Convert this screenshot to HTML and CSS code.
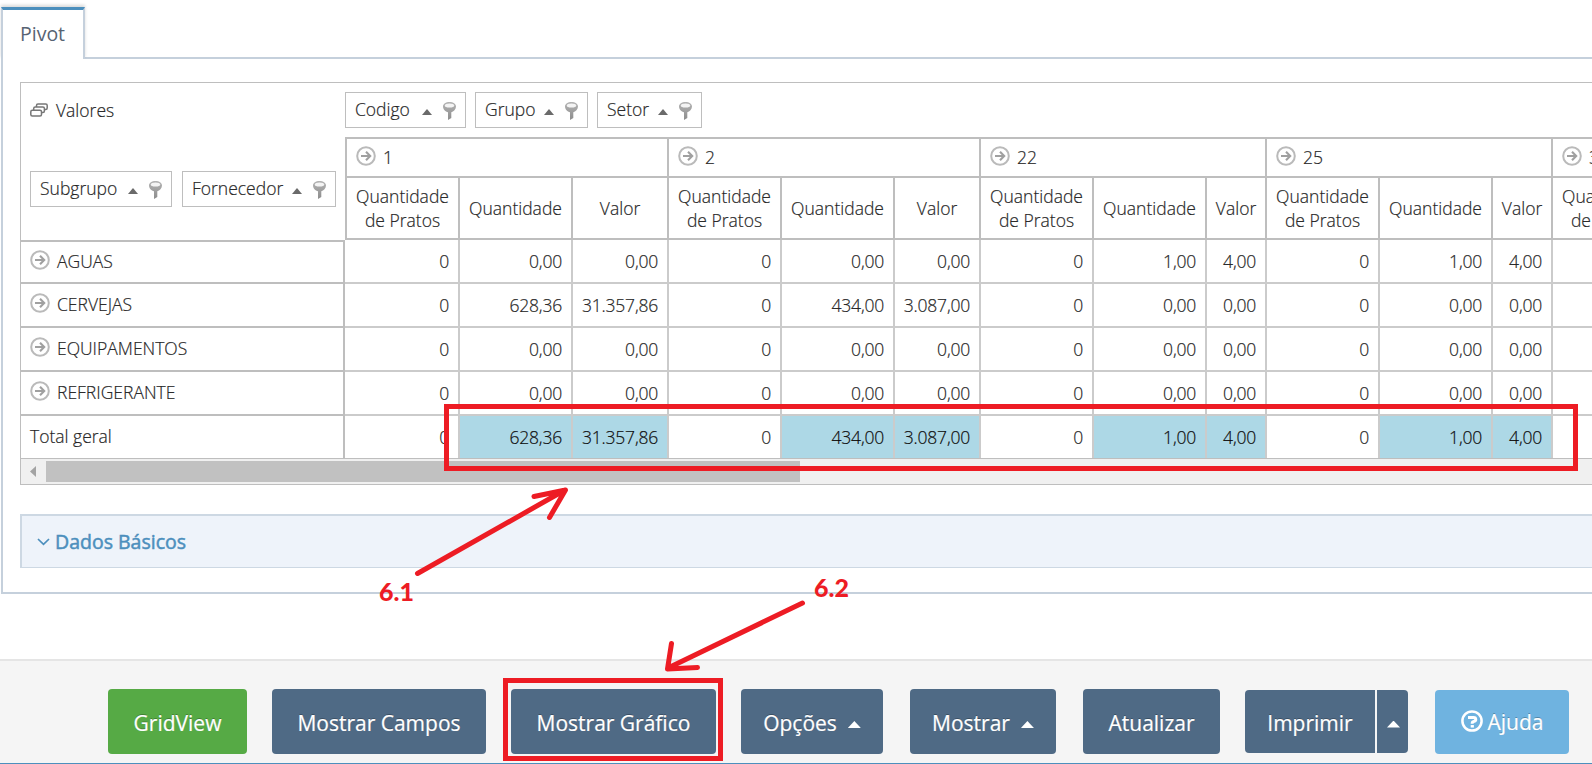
FILE: index.html
```html
<!DOCTYPE html>
<html lang="pt-br">
<head>
    <meta charset="UTF-8">
    <meta name="viewport" content="width=device-width, initial-scale=1.0">
    <title>Pivot</title>
    <link rel="stylesheet" href="styles.css">
</head>
<body>

<svg class="icon-defs" width="0" height="0">
    <defs>
        <linearGradient id="pinFill" x1="0" y1="0" x2="0" y2="1">
            <stop offset="0" stop-color="#b4b4b4"/>
            <stop offset="1" stop-color="#8c8c8c"/>
        </linearGradient>
        <symbol id="pin" viewBox="0 0 13 18">
            <path d="M0 4.500C0 1.800 2.800 0 6.500 0S13 1.800 13 4.500C13 7.500 10.500 9.500 8.300 10.300V16L5 18V10.300C2.500 9.500 0 7.500 0 4.500Z" fill="url(#pinFill)"/>
            <ellipse cx="6.500" cy="3.500" rx="4.700" ry="2" fill="#f4f4f4"/>
        </symbol>
        <symbol id="expand" viewBox="0 0 20 20">
            <circle cx="10" cy="10" r="8.800" fill="#fff" stroke="#bababa" stroke-width="2"/>
            <path d="M5 10H14M10 5.800L14.200 10L10 14.200" fill="none" stroke="#a0a0a0" stroke-width="2.100"/>
        </symbol>
        <symbol id="up" viewBox="0 0 10 6">
            <path d="M0 6L5 0L10 6Z" fill="#6a6a6a"/>
        </symbol>
    </defs>
</svg>

<div class="tabs">
    <a class="tab">Pivot</a>
</div>

<div class="tab-content">
    <div class="pivot">
        <div class="pivot-main">
            <div class="row-area">
                <div class="row-area-head">
                    <div class="data-field">
                        <svg width="18" height="14" viewBox="0 0 18 14" fill="#fff" stroke="#777" stroke-width="1.500">
                            <rect x="6.500" y="1" width="10.700" height="5.500" rx="1.500"/>
                            <rect x="3.700" y="4" width="10.700" height="5.500" rx="1.500"/>
                            <rect x="0.800" y="7.300" width="10.700" height="5.700" rx="1.500"/>
                        </svg>
                        <span>Valores</span>
                    </div>
                    <div class="fields">
                        <div class="field subgrupo">Subgrupo<svg class="up"><use href="#up"/></svg><svg class="pin"><use href="#pin"/></svg></div>
                        <div class="field fornecedor">Fornecedor<svg class="up"><use href="#up"/></svg><svg class="pin"><use href="#pin"/></svg></div>
                    </div>
                </div>
                <div class="row-head first"><svg class="expand"><use href="#expand"/></svg>AGUAS</div>
                <div class="row-head"><svg class="expand"><use href="#expand"/></svg>CERVEJAS</div>
                <div class="row-head"><svg class="expand"><use href="#expand"/></svg>EQUIPAMENTOS</div>
                <div class="row-head"><svg class="expand"><use href="#expand"/></svg>REFRIGERANTE</div>
                <div class="row-head last">Total geral</div>
            </div>

            <div class="column-area">
                <div class="fields">
                    <div class="field codigo">Codigo<svg class="up"><use href="#up"/></svg><svg class="pin"><use href="#pin"/></svg></div>
                    <div class="field grupo">Grupo<svg class="up"><use href="#up"/></svg><svg class="pin"><use href="#pin"/></svg></div>
                    <div class="field setor">Setor<svg class="up"><use href="#up"/></svg><svg class="pin"><use href="#pin"/></svg></div>
                </div>
                <table>
                    <colgroup>
                        <col class="c-first"><col class="c-qtd"><col class="c-valor1">
                        <col class="c-qtd"><col class="c-qtd"><col class="c-valor2">
                        <col class="c-qtd"><col class="c-qtd"><col class="c-valor">
                        <col class="c-qtd"><col class="c-qtd"><col class="c-valor">
                        <col class="c-qtd">
                    </colgroup>
                    <thead>
                        <tr class="groups">
                            <th colspan="3"><svg class="expand"><use href="#expand"/></svg>1</th>
                            <th colspan="3"><svg class="expand"><use href="#expand"/></svg>2</th>
                            <th colspan="3"><svg class="expand"><use href="#expand"/></svg>22</th>
                            <th colspan="3"><svg class="expand"><use href="#expand"/></svg>25</th>
                            <th><svg class="expand"><use href="#expand"/></svg>3</th>
                        </tr>
                        <tr class="measures">
                            <th>Quantidade<br>de Pratos</th><th>Quantidade</th><th>Valor</th>
                            <th>Quantidade<br>de Pratos</th><th>Quantidade</th><th>Valor</th>
                            <th>Quantidade<br>de Pratos</th><th>Quantidade</th><th>Valor</th>
                            <th>Quantidade<br>de Pratos</th><th>Quantidade</th><th>Valor</th>
                            <th>Quantidade<br>de Pratos</th>
                        </tr>
                    </thead>
                    <tbody>
                        <tr>
                            <td>0</td><td>0,00</td><td>0,00</td>
                            <td>0</td><td>0,00</td><td>0,00</td>
                            <td>0</td><td>1,00</td><td>4,00</td>
                            <td>0</td><td>1,00</td><td>4,00</td>
                            <td></td>
                        </tr>
                        <tr>
                            <td>0</td><td>628,36</td><td>31.357,86</td>
                            <td>0</td><td>434,00</td><td>3.087,00</td>
                            <td>0</td><td>0,00</td><td>0,00</td>
                            <td>0</td><td>0,00</td><td>0,00</td>
                            <td></td>
                        </tr>
                        <tr>
                            <td>0</td><td>0,00</td><td>0,00</td>
                            <td>0</td><td>0,00</td><td>0,00</td>
                            <td>0</td><td>0,00</td><td>0,00</td>
                            <td>0</td><td>0,00</td><td>0,00</td>
                            <td></td>
                        </tr>
                        <tr>
                            <td>0</td><td>0,00</td><td>0,00</td>
                            <td>0</td><td>0,00</td><td>0,00</td>
                            <td>0</td><td>0,00</td><td>0,00</td>
                            <td>0</td><td>0,00</td><td>0,00</td>
                            <td></td>
                        </tr>
                        <tr class="total">
                            <td>0</td><td class="hl">628,36</td><td class="hl">31.357,86</td>
                            <td>0</td><td class="hl">434,00</td><td class="hl">3.087,00</td>
                            <td>0</td><td class="hl">1,00</td><td class="hl">4,00</td>
                            <td>0</td><td class="hl">1,00</td><td class="hl">4,00</td>
                            <td></td>
                        </tr>
                    </tbody>
                </table>
            </div>
        </div>
        <div class="scrollbar">
            <svg width="6" height="11" viewBox="0 0 6 11"><path d="M6 0V11L0 5.500Z" fill="#a3a3a3"/></svg>
            <div class="thumb"></div>
        </div>
    </div>

    <div class="accordion">
        <svg width="13" height="8" viewBox="0 0 13 8"><path d="M1 1L6.500 6.300L12 1" fill="none" stroke="#4c8fbd" stroke-width="1.700"/></svg>
        <span>Dados Básicos</span>
    </div>
</div>

<div class="footer">
    <a class="btn btn-green gridview">GridView</a>
    <a class="btn campos">Mostrar Campos</a>
    <a class="btn grafico">Mostrar Gráfico</a>
    <a class="btn opcoes">Opções <i class="caret"></i></a>
    <a class="btn mostrar">Mostrar <i class="caret"></i></a>
    <a class="btn atualizar">Atualizar</a>
    <div class="btn-group">
        <a class="btn imprimir">Imprimir</a>
        <a class="btn toggle"><i class="caret"></i></a>
    </div>
    <a class="btn btn-blue ajuda">
        <svg width="22" height="22" viewBox="0 0 22 22" fill="none" stroke="#fff">
            <circle cx="11" cy="11" r="9.600" stroke-width="2.500"/>
            <path d="M7 7.500H12.500C15.500 7.500 15.500 11.200 12.700 11.600C11.300 11.800 11.200 12.200 11.200 13.800" stroke-width="3"/>
            <path d="M9.700 16.300H12.900" stroke-width="2.500"/>
        </svg>
        Ajuda
    </a>
</div>

<!-- step markers -->
<svg class="marks" width="1592" height="764" viewBox="0 0 1592 764">
    <rect x="446.500" y="406.500" width="1129" height="62"/>
    <rect x="505.500" y="680.500" width="215" height="78"/>
    <path d="M417.500 573.500L565 490M534 496.500L565.500 490L549.500 517.500"/>
    <path d="M802.500 603L668 668M671.500 643.500L667.500 669L697.500 667.500"/>
    <text x="379" y="601">6.1</text>
    <text x="814" y="597">6.2</text>
</svg>

</body>
</html>
```
FILE: styles.css
```css
* {
    box-sizing: border-box;
}
body {
    margin: 0;
    height: 764px;
    padding-top: 7px;
    position: relative;
    overflow: hidden;
    background-color: #fff;
    font-family: "Open Sans", sans-serif;
    font-size: 17.5px;
    font-weight: 300;
    color: #222;
    display: flex;
    flex-direction: column;
}
svg {
    display: block;
    flex: none;
}
.icon-defs {
    position: absolute;
}

/* tabs */
.tabs {
    display: flex;
    padding-left: 1px;
    height: 50px;
}
.tab {
    position: relative;
    z-index: 1;
    width: 84px;
    height: 52px;
    border: 2px solid #c5d0dc;
    border-top: 3px solid #4c8fbd;
    border-bottom: none;
    background-color: #fff;
    box-shadow: 0 -2px 3px rgba(0, 0, 0, 0.15);
    clip-path: inset(-6px -4px 0 -1px);
    padding-left: 17px;
    line-height: 48px;
    font-size: 19.5px;
    font-weight: 400;
    color: #576373;
}
.tab-content {
    margin-left: 1px;
    height: 537px;
    border: 2px solid #c5d0dc;
    border-right: none;
    padding: 23px 0 0 17px;
}

/* pivot grid */
.pivot {
    height: 403px;
    border: 1px solid #bebebe;
    border-right: none;
    overflow: hidden;
    -webkit-text-stroke: 0.2px #333;
}
.pivot-main {
    display: flex;
}
.row-area {
    flex: none;
    width: 324px;
}
.row-area-head {
    height: 157px;
    padding: 14px 9px 0;
}
.data-field {
    display: flex;
    align-items: center;
    gap: 8px;
    height: 26px;
}
.fields {
    display: flex;
    gap: 9px;
}
.row-area .fields {
    gap: 10px;
    margin-top: 48px;
}
.column-area {
    flex: 1;
    min-width: 0;
    overflow: hidden;
}
.column-area .fields {
    height: 54px;
    padding-top: 9px;
}
.field {
    display: flex;
    align-items: center;
    height: 36px;
    border: 1px solid #bebebe;
    padding: 0 9px 2px;
}
.subgrupo { width: 142px; }
.fornecedor { width: 154px; }
.codigo { width: 121px; }
.grupo { width: 113px; }
.setor { width: 105px; }
.up {
    width: 10px;
    height: 6px;
    margin: 6px 11px 0 auto;
}
.pin {
    width: 13px;
    height: 18px;
    margin-top: 3px;
}
.row-head {
    display: flex;
    align-items: center;
    height: 44px;
    padding: 0 0 2px 9px;
    border-right: 2px solid #bebebe;
    border-bottom: 2px solid #bebebe;
}
.row-head.first {
    border-top: 2px solid #bebebe;
}
.row-head.last {
    height: 42px;
    border-bottom: none;
}
.row-head .expand {
    margin: -2px 7px 0 0;
}
.expand {
    width: 20px;
    height: 20px;
}

table {
    table-layout: fixed;
    width: 1321px;
    border-collapse: separate;
    border-spacing: 0;
}
.c-first { width: 115px; }
.c-qtd { width: 113px; }
.c-valor1 { width: 96px; }
.c-valor2 { width: 86px; }
.c-valor { width: 60px; }
th {
    padding: 0;
    font-weight: 300;
    border-right: 2px solid #bebebe;
    border-bottom: 2px solid #bebebe;
}
th:first-child {
    border-left: 2px solid #bebebe;
}
.groups th {
    height: 41px;
    border-top: 2px solid #bebebe;
    padding-left: 9px;
    text-align: left;
    line-height: 37px;
}
.groups .expand {
    float: left;
    margin: 7px 7px 0 0;
}
.measures th {
    height: 62px;
    padding-bottom: 1px;
    line-height: 24px;
}
td {
    height: 44px;
    padding: 0 9px 1px 0;
    text-align: right;
    letter-spacing: -0.2px;
    border-right: 2px solid #cbcbcb;
    border-bottom: 2px solid #cbcbcb;
}
.total td {
    height: 42px;
    border-bottom: none;
}
.total .hl {
    background-color: #add8e6;
    background-clip: padding-box;
    color: #000;
}

.scrollbar {
    display: flex;
    align-items: center;
    height: 26px;
    border-top: 1px solid #bebebe;
    background-color: #f0f0f0;
    padding-left: 9px;
}
.thumb {
    width: 754px;
    height: 21px;
    margin-left: 10px;
    background-color: #c1c1c1;
}

.accordion {
    display: flex;
    align-items: center;
    gap: 5px;
    height: 54px;
    margin-top: 29px;
    padding-left: 15px;
    border: 2px solid #cdd8e3;
    border-right: none;
    border-bottom-width: 1px;
    background-color: #eef3fa;
    color: #4c8fbd;
    font-size: 19.5px;
    font-weight: 400;
    -webkit-text-stroke: 0.5px #4c8fbd;
}

/* buttons */
.footer {
    display: flex;
    align-items: flex-start;
    height: 105px;
    margin-top: 65px;
    padding: 28px 0 0 108px;
    border-top: 2px solid #e5e5e5;
    border-bottom: 1px solid #4c8fbd;
    background-color: #f5f5f5;
}
.btn {
    display: flex;
    flex: none;
    align-items: center;
    justify-content: center;
    height: 65px;
    padding-top: 2px;
    border-radius: 4px;
    background-color: #4f6a85;
    color: #fff;
    font-size: 21px;
    font-weight: 400;
    white-space: nowrap;
    text-shadow: 0 -1px 0 rgba(0, 0, 0, 0.25);
    -webkit-text-stroke: 0.2px #fff;
}
.btn-green { background-color: #56aa45; }
.btn-blue { background-color: #6fb3e0; }
.gridview { width: 139px; }
.campos { width: 214px; margin-left: 25px; }
.grafico { width: 205px; margin-left: 25px; }
.opcoes { width: 142px; margin-left: 25px; }
.mostrar { width: 146px; margin-left: 27px; }
.atualizar { width: 137px; margin-left: 27px; }
.btn-group {
    display: flex;
    gap: 2px;
    margin: 1px 0 0 25px;
}
.btn-group .btn {
    height: 63px;
}
.imprimir {
    width: 130px;
    border-radius: 4px 0 0 4px;
}
.toggle {
    width: 31px;
    border-radius: 0 4px 4px 0;
}
.ajuda {
    width: 134px;
    height: 64px;
    margin: 1px 0 0 27px;
    padding-top: 0;
    gap: 5px;
}
.ajuda svg {
    margin-top: -3px;
}
.caret {
    width: 13px;
    height: 7px;
    margin: 4px 0 0 11px;
    background-color: #fff;
    clip-path: polygon(50% 0, 100% 100%, 0 100%);
}
.toggle .caret {
    margin: 3px 0 0 2px;
}

.marks {
    position: absolute;
    left: 0;
    top: 0;
    z-index: 2;
    fill: none;
    stroke: #ed1c24;
    stroke-width: 5;
    stroke-linecap: round;
    stroke-linejoin: round;
    pointer-events: none;
}
.marks rect {
    stroke-linejoin: miter;
}
.marks text {
    fill: #ed1c24;
    stroke: none;
    font-family: Lato, sans-serif;
    font-size: 25px;
    font-weight: 900;
}
```
